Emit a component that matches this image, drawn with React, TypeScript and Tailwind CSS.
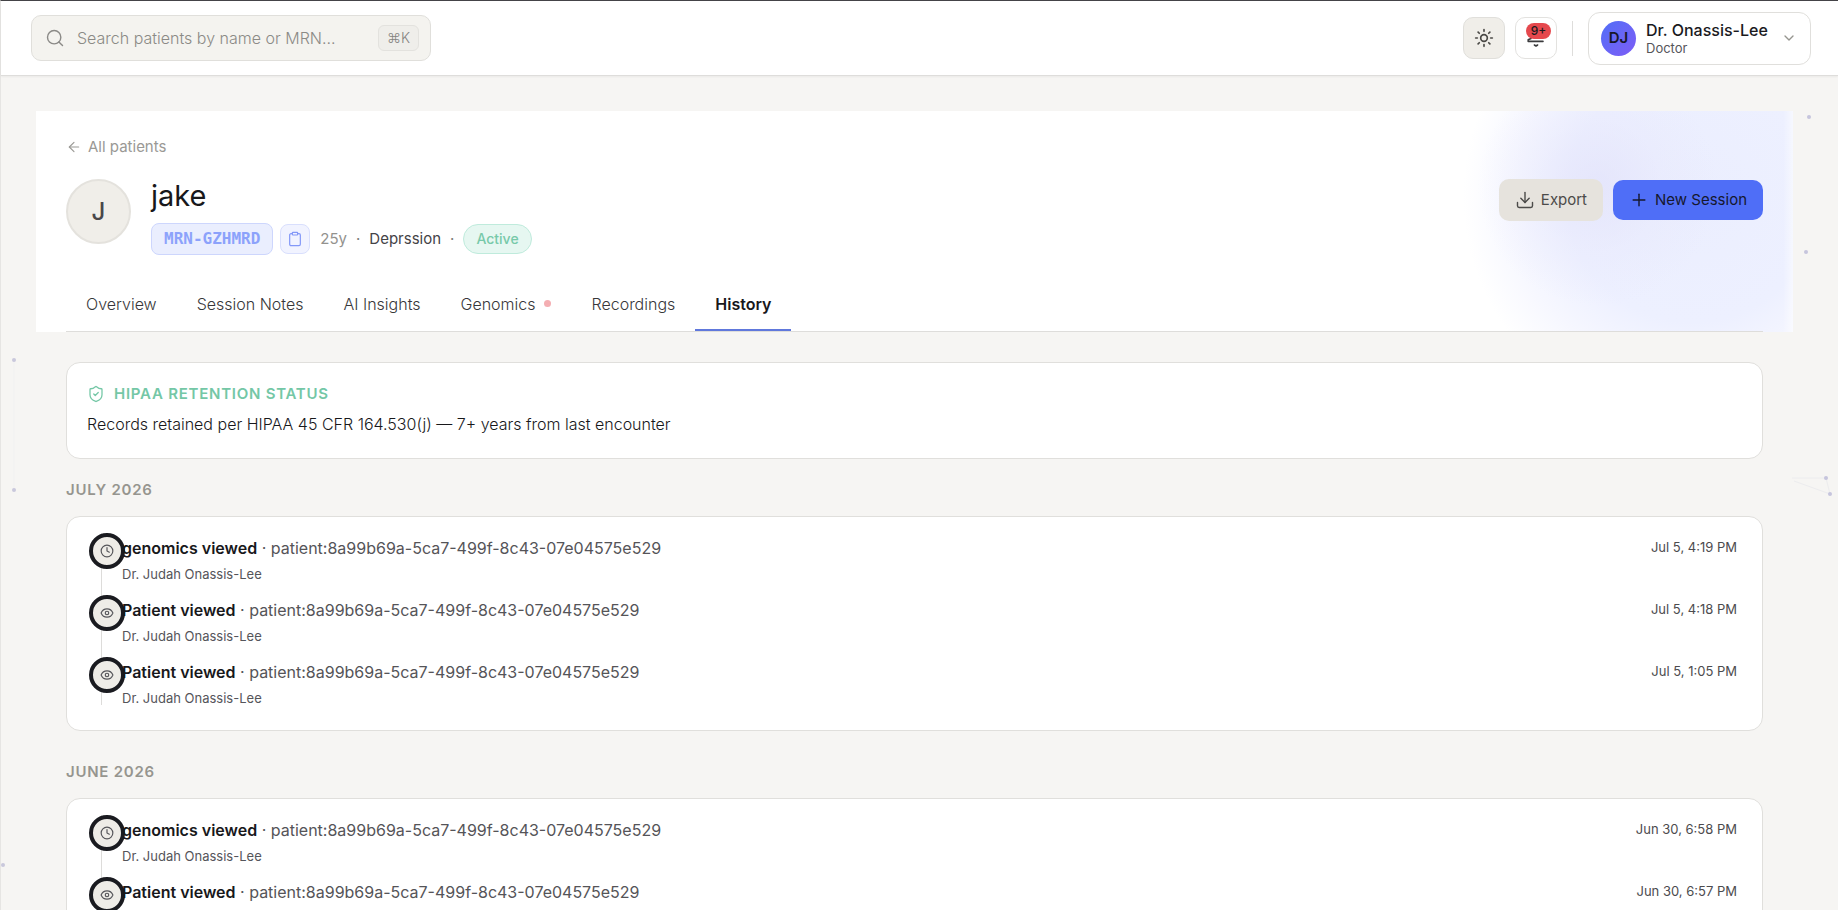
import { ArrowLeft, ChevronDown, Clipboard, Clock, Download, Eye, Plus, Search, ShieldCheck, Sun } from 'lucide-react';

type AuditEvent = { kind: 'genomics' | 'view'; title: string; target: string; actor: string; time: string };

const TARGET = 'patient:8a99b69a-5ca7-499f-8c43-07e04575e529';
const ACTOR = 'Dr. Judah Onassis-Lee';

const months: { label: string; events: AuditEvent[] }[] = [
  {
    label: 'July 2026',
    events: [
      { kind: 'genomics', title: 'genomics viewed', target: TARGET, actor: ACTOR, time: 'Jul 5, 4:19 PM' },
      { kind: 'view', title: 'Patient viewed', target: TARGET, actor: ACTOR, time: 'Jul 5, 4:18 PM' },
      { kind: 'view', title: 'Patient viewed', target: TARGET, actor: ACTOR, time: 'Jul 5, 1:05 PM' },
    ],
  },
  {
    label: 'June 2026',
    events: [
      { kind: 'genomics', title: 'genomics viewed', target: TARGET, actor: ACTOR, time: 'Jun 30, 6:58 PM' },
      { kind: 'view', title: 'Patient viewed', target: TARGET, actor: ACTOR, time: 'Jun 30, 6:57 PM' },
    ],
  },
];

const tabs = [
  { name: 'Overview' },
  { name: 'Session Notes' },
  { name: 'AI Insights' },
  { name: 'Genomics', dot: true },
  { name: 'Recordings' },
  { name: 'History', active: true },
];

function BellIcon() {
  return (
    <svg viewBox="0 0 20 20" className="size-5" fill="none" stroke="currentColor" strokeWidth="1.6" strokeLinecap="round" strokeLinejoin="round" aria-hidden="true">
      <path d="M10 2a5 5 0 0 0-5 5v3.5L2.2 11.8V13.4H17M15 7a5 5 0 0 0-5-5" />
      <path d="M8.4 17 10 18l1.6-1" />
    </svg>
  );
}

function Particles() {
  return (
    <div aria-hidden="true" className="pointer-events-none absolute inset-0 overflow-hidden">
      <svg className="absolute left-0 top-0 h-[910px] w-10" viewBox="0 0 40 910" fill="#c9c8dc">
        <path d="M13 360V490" stroke="#f1f1f1" />
        <circle cx="13" cy="359" r="2" />
        <circle cx="13" cy="489" r="2" />
        <circle cx="2" cy="864" r="2" />
      </svg>
      <svg className="absolute right-0 top-0 h-[910px] w-12" viewBox="0 0 48 910" fill="#c6c5dd">
        <path d="M2 477H36L40 493 4 480" stroke="#ececee" fill="none" />
        <circle cx="19" cy="116" r="2" />
        <circle cx="16" cy="251" r="2" />
        <circle cx="36" cy="477" r="2" />
        <circle cx="40" cy="493" r="2" />
      </svg>
    </div>
  );
}

function TopBar() {
  return (
    <header className="relative flex h-[75px] items-center justify-between border-b border-[#dedddb] bg-white pl-[30px] pr-[27px] shadow-xs">
      <div className="flex h-[46px] w-[400px] items-center rounded-[10px] border border-[#e0dfdb] bg-[#f4f3ef] pl-[13px] pr-[11px]">
        <Search className="size-5 shrink-0 text-[#8b8a87]" strokeWidth={1.7} aria-hidden="true" />
        <input
          id="patient-search"
          type="text"
          aria-label="Search patients"
          placeholder="Search patients by name or MRN..."
          className="ml-3 min-w-0 flex-1 bg-transparent text-base font-light text-[#33322f] outline-none placeholder:text-[#8b8a86]"
        />
        <kbd className="flex h-[26px] w-[41px] shrink-0 items-center justify-center rounded-md border border-[#e3e2de] bg-[#efeeea] font-[Inter,'DejaVu_Sans',sans-serif] text-sm font-light text-[#84837f]">⌘K</kbd>
      </div>
      <div className="flex items-center">
        <button type="button" aria-label="Toggle theme" className="flex size-[42px] items-center justify-center rounded-[10px] border border-[#e0dfdb] bg-[#f0eee9] text-[#4a4946]">
          <Sun className="size-5" strokeWidth={2} />
        </button>
        <button type="button" aria-label="Notifications" className="relative ml-[10px] flex size-[42px] items-center justify-center rounded-[10px] border border-[#e3e2df] bg-white text-[#3a3a3c]">
          <BellIcon />
          <span className="absolute left-[10px] top-[5px] flex h-4 w-[25px] items-center justify-center rounded-full bg-[#e5484d] text-xs font-medium text-[#1a1a1e]">9+</span>
        </button>
        <div className="mx-[15px] h-[35px] w-px bg-[#dedddb]" />
        <button type="button" className="flex h-[53px] w-[223px] items-center rounded-xl border border-[#e0dfdc] bg-white pl-3 pr-[13px] text-left">
          <span className="flex size-[35px] shrink-0 items-center justify-center rounded-full bg-linear-to-br from-[#4f6ef7] to-[#7c5cf6] text-[15px] font-semibold text-[#17172b]">DJ</span>
          <span className="ml-[10px] flex flex-1 flex-col whitespace-nowrap">
            <span className="text-base font-medium leading-5 text-[#1a1a1e]">Dr. Onassis-Lee</span>
            <span className="text-[13px] leading-[17px] text-[#55555a]">Doctor</span>
          </span>
          <ChevronDown className="size-4 shrink-0 text-[#96958f]" aria-hidden="true" />
        </button>
      </div>
    </header>
  );
}

function PatientHeader() {
  return (
    <section className="relative mx-[35px] mt-[35px] bg-white px-[30px] pt-[25px]">
      <div aria-hidden="true" className="absolute inset-y-0 right-0 w-[360px] bg-[linear-gradient(to_left,#ffffff88,#ffffff00_10px),radial-gradient(circle_120px_at_165px_75px,#e2e2fabb,#e6e6fb55_55%,#e8e8fc00),radial-gradient(circle_230px_at_260px_85px,#ebeefe,#edf0ff_55%,#f6f7ff_78%,#ffffff00)]" />
      <div className="relative">
        <a href="#patients" className="flex w-fit items-center gap-1.5 text-[15px] leading-[22px] text-[#9a9995]">
          <ArrowLeft className="size-4" strokeWidth={1.7} aria-hidden="true" />
          All patients
        </a>
        <div className="mt-[21px] flex items-start justify-between">
          <div className="flex">
            <div className="flex size-[65px] items-center justify-center rounded-full border-2 border-[#e4e2dd] bg-[#f0eee9] text-2xl font-medium text-[#48474a]">J</div>
            <div className="ml-5">
              <h1 className="text-[29px] leading-[34px] text-[#18181b]">jake</h1>
              <div className="mt-[10px] flex h-8 items-center whitespace-nowrap text-[15px]">
                <span className="flex h-8 items-center rounded-lg border border-[#cdd6fd] bg-[#eaeefe] px-3 font-['DejaVu_Sans_Mono',monospace] text-base font-bold text-[#8ca2fb]">MRN-GZHMRD</span>
                <button type="button" aria-label="Copy MRN" className="ml-[7px] flex size-[30px] items-center justify-center rounded-lg border border-[#d9dffd] bg-[#f1f3ff] text-[#8398f8]">
                  <Clipboard className="size-4" strokeWidth={1.8} />
                </button>
                <span className="ml-[10px] text-[#93928e]">25y</span>
                <span className="mx-[9px] text-[#7b7a78]">·</span>
                <span className="text-[#444347]">Deprssion</span>
                <span className="mx-[9px] text-[#7b7a78]">·</span>
                <span className="flex h-[30px] items-center rounded-full border border-[#bfebdc] bg-[#e6f7f1] px-3 text-sm font-medium text-[#77c9a9]">Active</span>
              </div>
            </div>
          </div>
          <div className="flex items-center gap-[10px] text-[15px]">
            <button type="button" className="flex h-[42px] items-center gap-1.5 rounded-[10px] bg-[#e6e3dd] px-4 text-[#4c4b49]">
              <Download className="size-5" strokeWidth={1.7} aria-hidden="true" />
              Export
            </button>
            <button type="button" className="flex h-10 items-center gap-1.5 rounded-[10px] bg-[#4f6ef7] px-4 text-[#16182e]">
              <Plus className="size-5" strokeWidth={1.7} aria-hidden="true" />
              New Session
            </button>
          </div>
        </div>
        <div role="tablist" className="mt-[23px] flex border-b border-[#dedddb]">
          {tabs.map((tab) => (
            <button
              key={tab.name}
              type="button"
              role="tab"
              aria-selected={!!tab.active}
              className={
                tab.active
                  ? 'flex h-[53px] items-center border-b-2 border-[#6078dc] px-5 text-base font-semibold text-[#18181b]'
                  : 'flex h-[53px] items-center border-b-2 border-transparent px-5 text-base font-light text-[#38373a]'
              }
            >
              {tab.name}
              {tab.dot && <span className="ml-[9px] size-[7px] rounded-full bg-[#f4aeb2]" />}
            </button>
          ))}
        </div>
      </div>
    </section>
  );
}

function EventRow({ event }: { event: AuditEvent }) {
  const Icon = event.kind === 'genomics' ? Clock : Eye;
  return (
    <li className="relative flex h-[62px] pl-[33px]">
      <span className="absolute left-0 top-0 flex size-9 items-center justify-center rounded-full border-4 border-[#1a1b20] bg-[#eeece7] text-[#55555a]">
        <Icon className="size-[14px]" aria-hidden="true" />
      </span>
      <div className="relative min-w-0 flex-1">
        <p className="text-base leading-[30px] text-[#555458]">
          <span className="font-semibold text-[#18181b]">{event.title}</span> · {event.target}
        </p>
        <p className="text-[13px] leading-[22px] text-[#55555a]">{event.actor}</p>
      </div>
      <time className="text-[13px] leading-7 text-[#4c4b4e]">{event.time}</time>
    </li>
  );
}

export default function App() {
  return (
    <div className="relative min-h-screen border-l border-t border-l-[#e6e5e3] border-t-[#444347] bg-[#f6f5f3] font-[Inter,'Open_Sans',sans-serif] text-[#18181b]">
      <Particles />
      <TopBar />
      <main className="relative pr-[10px]">
        <PatientHeader />
        <div className="mt-[30px] px-[65px]">
          <section className="h-[97px] rounded-[14px] border border-[#e0dfdc] bg-white px-5 pt-[19px]">
            <h2 className="flex h-6 items-center gap-[9px] text-[15px] font-semibold uppercase tracking-wider text-[#74c7a6]">
              <ShieldCheck className="size-[18px]" strokeWidth={1.7} aria-hidden="true" />
              HIPAA Retention Status
            </h2>
            <p className="mt-1.5 text-base font-light leading-6">Records retained per HIPAA 45 CFR 164.530(j) — 7+ years from last encounter</p>
          </section>
          {months.map((month) => (
            <section key={month.label} className="mb-[29px] mt-[19px]">
              <h2 className="text-[15px] font-semibold uppercase leading-6 tracking-wider text-[#96958f]">{month.label}</h2>
              <div className="mt-[14px] rounded-[14px] border border-[#e0dfdc] bg-white pb-[11px] pl-[22px] pr-[25px] pt-4">
                <ul className="relative">
                  <li aria-hidden="true" className="absolute bottom-[14px] left-3 top-0 w-px bg-[#dddcda]" />
                  {month.events.map((event) => (
                    <EventRow key={event.time} event={event} />
                  ))}
                </ul>
              </div>
            </section>
          ))}
        </div>
      </main>
    </div>
  );
}
